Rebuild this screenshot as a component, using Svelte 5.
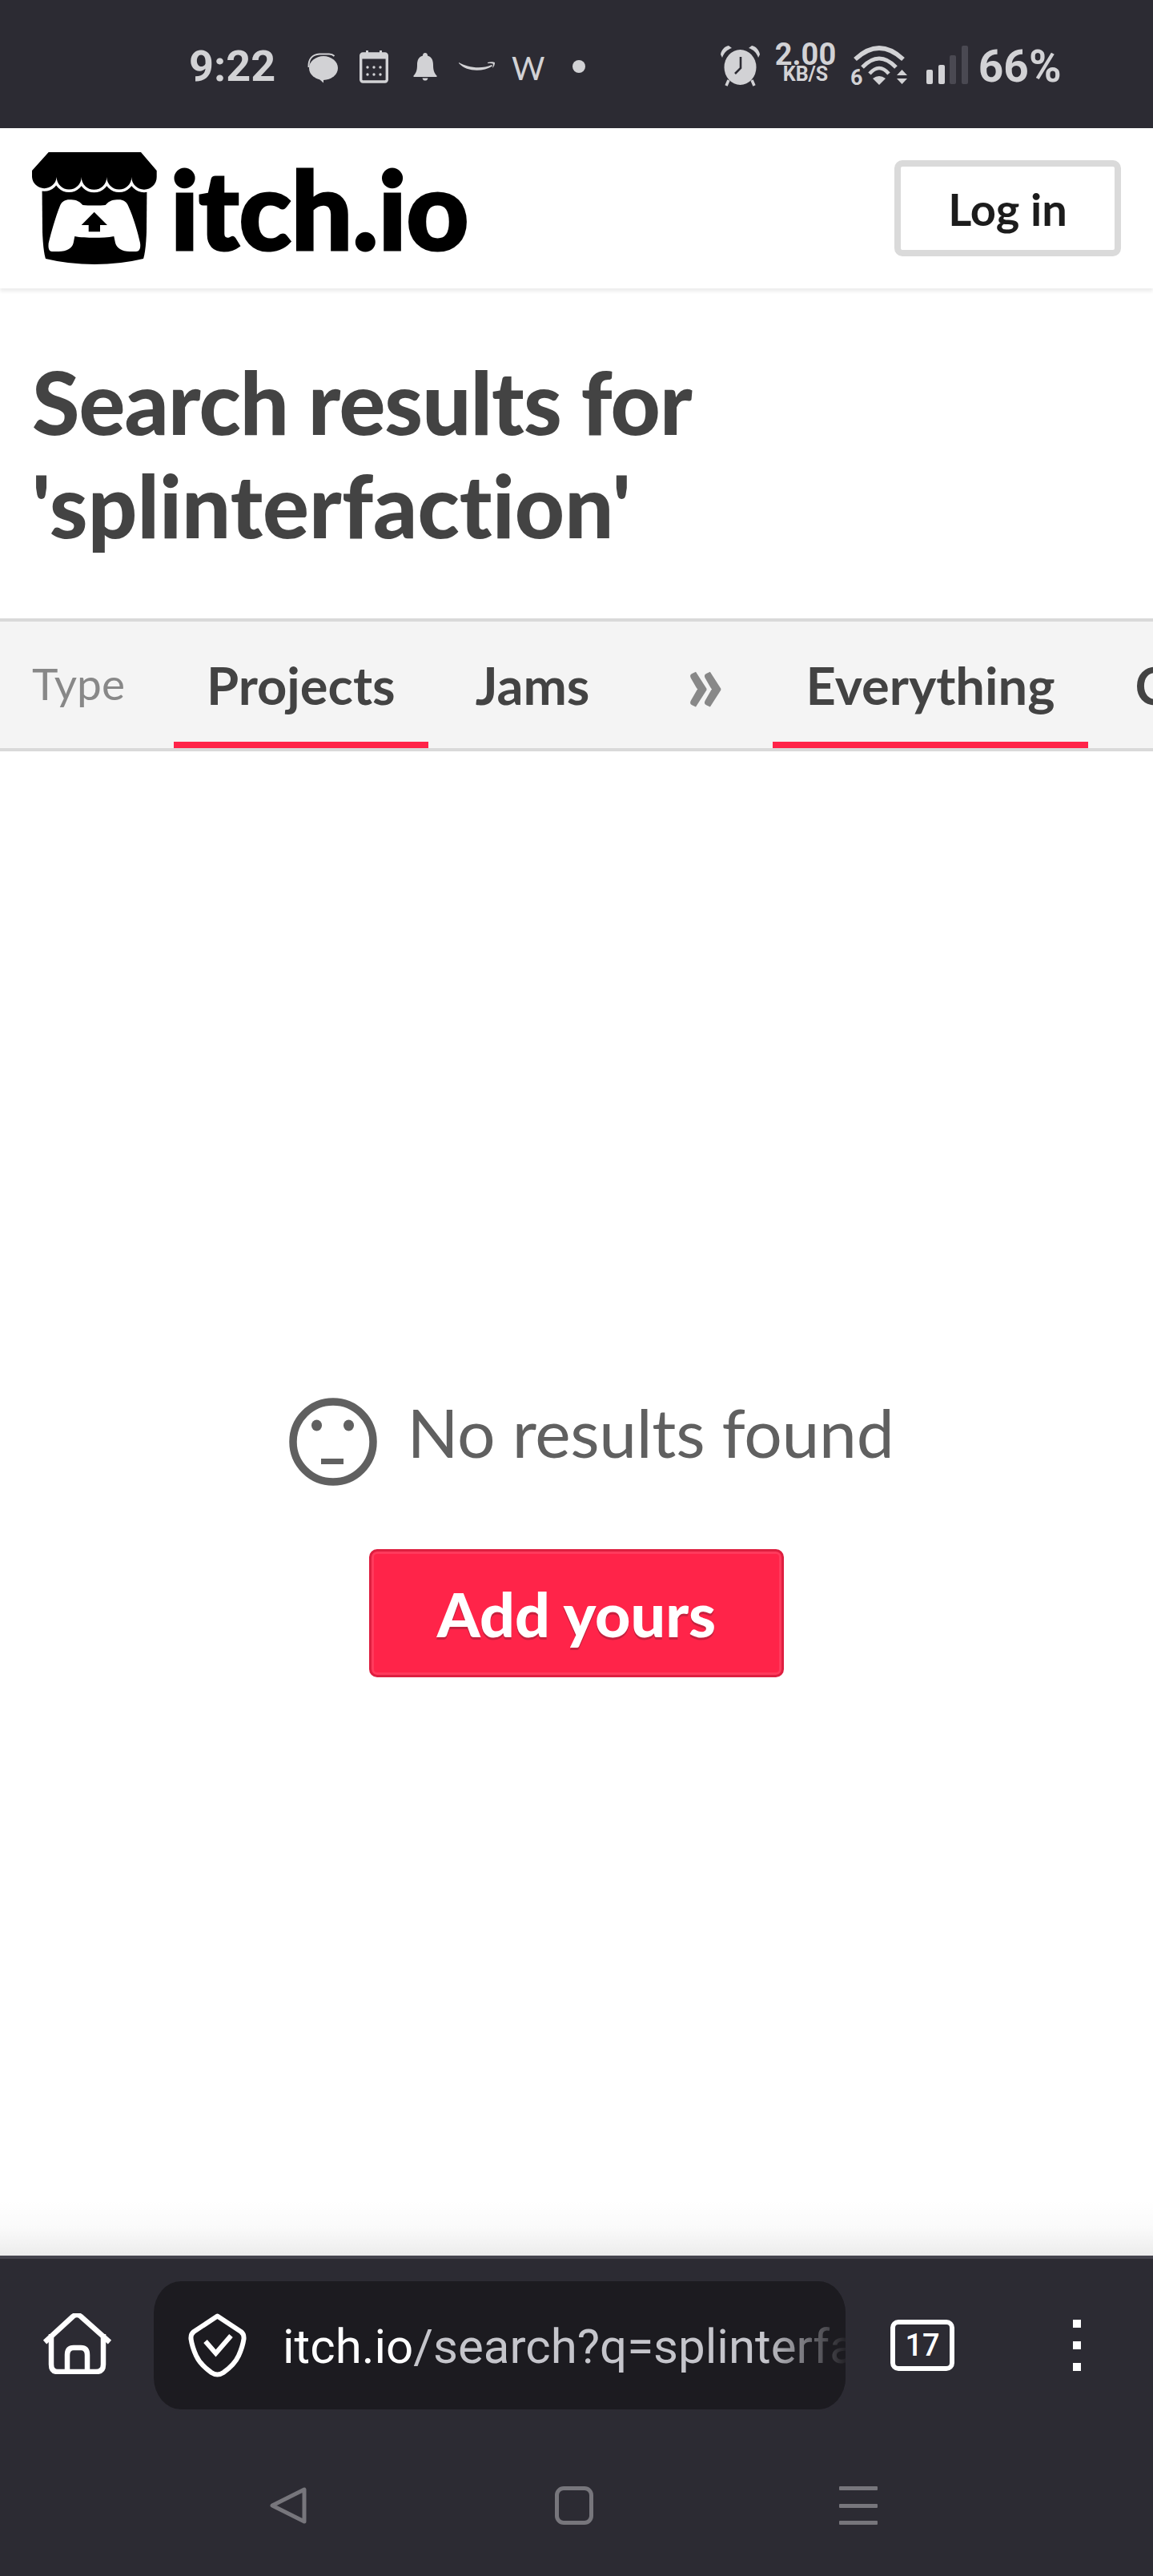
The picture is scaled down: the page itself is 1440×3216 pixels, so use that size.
<script>
  const tabsA = [
    { label: 'Projects', on: true },
    { label: 'Jams', on: false }
  ];
  const tabsB = [
    { label: 'Everything', on: true },
    { label: 'Classification', on: false }
  ];
</script>

<div class="page">
  <div class="status">
    <span class="time">9:22</span>
    <svg class="s chat" width="38" height="56" viewBox="0 55 38 56" fill="#d2d2d5">
      <path d="M1.500 84 C1 74 6 68 15 67.500 H27 C30 67.500 32 68.500 33.500 70" fill="none" stroke="#d2d2d5" stroke-width="2"/>
      <ellipse cx="20" cy="85" rx="18" ry="15"/>
      <path d="M7 92 L20 103.500 V96 Z"/>
    </svg>
    <svg class="s cal" width="36" height="56" viewBox="0 55 36 56" fill="#d2d2d5">
      <rect x="1.700" y="67" width="32.600" height="35" rx="2.500" fill="none" stroke="#d2d2d5" stroke-width="3.400"/>
      <rect x="1.700" y="67" width="32.600" height="6.500"/>
      <rect x="8" y="63" width="3" height="6"/><rect x="25" y="63" width="3" height="6"/>
      <circle cx="10" cy="84" r="1.700"/><circle cx="18" cy="84" r="1.700"/><circle cx="26" cy="84" r="1.700"/>
      <circle cx="10" cy="93" r="1.700"/><circle cx="18" cy="93" r="1.700"/><circle cx="26" cy="93" r="1.700"/>
    </svg>
    <svg class="s bell" width="30" height="56" viewBox="0 55 30 56" fill="#d2d2d5">
      <path d="M15 66 C17 66 18 67.500 18 69.500 C23 71 25 75 25 81 C25 87 26 91 29.500 94.500 V96 H.5 V94.500 C4 91 5 87 5 81 C5 75 7 71 12 69.500 C12 67.500 13 66 15 66 Z"/>
      <path d="M11.500 97.500 H18.500 C18 100 16.500 100.500 15 100.500 C13.500 100.500 12 100 11.500 97.500 Z"/>
    </svg>
    <svg class="s smile" width="45" height="56" viewBox="0 55 45 56" fill="#d2d2d5">
      <path d="M0 78 C10 84 28 87 41 81 L42 82.500 C30 90 10 90 0 79 Z"/>
      <path d="M36 78 C39 77 43 77 45 78 C45 81 44 83 42 85 C43 82 43 80 42.500 79.500 C41 79 38 79 36 79 Z"/>
    </svg>
    <span class="w">W</span>
    <span class="dot"></span>
    <svg class="s alarm" width="49" height="56" viewBox="0 55 49 56" fill="#d2d2d5">
      <ellipse cx="24.500" cy="84" rx="20" ry="22"/>
      <path d="M0 68 C1 62 5 58 10 57 L14 60 C8 62 4 66 2 72 Z"/>
      <path d="M49 68 C48 62 44 58 39 57 L35 60 C41 62 45 66 47 72 Z"/>
      <path d="M10 100 L7 107 M39 100 L42 107" stroke="#d2d2d5" stroke-width="3.500" fill="none"/>
      <path d="M25 71 V85 L18 92" stroke="#2c2b33" stroke-width="2.600" fill="none"/>
    </svg>
    <span class="speed"><b>2.00</b><i>KB/S</i></span>
    <svg class="s wifi" width="72" height="56" viewBox="0 55 72 56" fill="#d2d2d5">
      <path d="M6 74 Q36 46 66 74" fill="none" stroke="#d2d2d5" stroke-width="5.500"/>
      <path d="M15 84 Q36 62 57 84" fill="none" stroke="#d2d2d5" stroke-width="5"/>
      <path d="M24 92 Q36 78 48 92" fill="none" stroke="#d2d2d5" stroke-width="4.500"/>
      <path d="M28 98 Q36 92 44 98 L36 106 Z"/>
      <path d="M64.500 87 L71 94 H58 Z M58 98 H71 L64.500 105 Z"/>
      <text x="0" y="106" class="six">6</text>
    </svg>
    <span class="bars"><i class="b1"></i><i class="b2"></i><i class="b3"></i><i class="b4"></i></span>
    <span class="batt">66%</span>
  </div>

  <header class="top">
    <svg class="mark" width="156" height="140" viewBox="0 0 156 140">
      <path d="M12.500 40 H143.500 L143 100 Q142 124 139 133 Q110 140 78 140 Q46 140 17 133 Q14 124 13 100 Z" fill="#000"/>
      <path d="M63.300 66 C58 60 53 59.300 46.700 59.300 C41 59.300 37 62 35 66.700 C29 82 24 100 20.700 113.300 C20 120 21 124 25 124 H33 C44 124 50 120 51.700 113.300 L53.300 105 C60 106.500 70 106.700 77.700 106.700 C86 106.700 95 106.500 102.300 105 L104 113.300 C106 120 112 124 122 124 H130 C134 124 136 120 135 113.300 C132 100 127 82 120 66.700 C118 62 114 59.300 108.300 59.300 C102 59.300 97 60 91.700 66 C86 66.700 70 66.700 63.300 66 Z" fill="#fff"/>
      <path d="M77.700 74.700 L94 91 H85 V99.300 H70.700 V91 H61.700 Z" fill="#000"/>
      <path d="M20.700 0 Q78 -1 136 0 L155.700 23 V31 A15.700 15.700 0 0 1 124.300 31 A15.400 15.400 0 0 1 93.300 31 A15.800 15.800 0 0 1 61.700 31 A15.500 15.500 0 0 1 30.700 31 A15.400 15.400 0 0 1 0 31 V23 Z" fill="#000" stroke="#fff" stroke-width="7" paint-order="stroke"/>
    </svg>
    <span class="word">itch.io</span>
    <button class="login">Log in</button>
  </header>

  <h1 class="title">Search results for<br /><span class="second">'splinterfaction'</span></h1>

  <nav class="filters">
    <span class="ftype">Type</span>
    {#each tabsA as t}
      <span class="tab" class:on={t.on}>{t.label}</span>
    {/each}
    <span class="chev">»</span>
    {#each tabsB as t}
      <span class="tab" class:on={t.on}>{t.label}</span>
    {/each}
  </nav>

  <main class="empty">
    <div class="msg">
      <svg width="110" height="110" viewBox="0 0 110 110" fill="#606060">
        <circle cx="55" cy="55" r="50" fill="none" stroke="#606060" stroke-width="9.500"/>
        <ellipse cx="34.500" cy="34.500" rx="6.500" ry="7"/>
        <ellipse cx="74.500" cy="34.500" rx="6.500" ry="7"/>
        <rect x="40" y="76" width="28" height="7"/>
      </svg>
      <span class="msgtext">No results found</span>
    </div>
    <button class="add">Add yours</button>
  </main>

  <footer class="chrome">
    <div class="fade"></div>
    <div class="tools">
      <svg class="home" width="85" height="76" viewBox="0 0 85 76" fill="none" stroke="#fff" stroke-width="6.500">
        <path d="M2 36 L37 4 Q42 0 47 4 L83 36" stroke-linejoin="round"/>
        <path d="M10 26 V64 Q10 73 18 73 H66 Q75 73 75 64 V26"/>
        <path d="M30 73 V52 Q30 43 38 43 H47 Q55 43 55 52 V73"/>
      </svg>
      <div class="url">
        <svg class="shield" width="73" height="80" viewBox="0 0 73 80" fill="none" stroke="#fff" stroke-width="6">
          <path d="M36.500 3.500 L66 23 Q70 26 69.500 32 Q68 42 63 53 Q58 64 44 74 Q36.500 79 29 74 Q15 64 10 53 Q5 42 3.500 32 Q3 26 7 23 Z" stroke-linejoin="round"/>
          <path d="M21.500 35 L34.500 50 L53.500 28"/>
        </svg>
        <span class="addr"><em>itch.io</em>/search?q=splinterfaction</span>
        <span class="urlfade"></span>
      </div>
      <span class="count">17</span>
      <span class="menu"><i></i><i></i><i></i></span>
    </div>
    <div class="nav">
      <svg class="back" width="46" height="48" viewBox="0 0 46 48" fill="none" stroke="#77767c" stroke-width="5" stroke-linejoin="round">
        <path d="M43 4 V44 L3 24 Z" />
      </svg>
      <span class="square"></span>
      <span class="lines"><i></i><i></i><i></i></span>
    </div>
  </footer>
</div>

<style>
  :global(body) { margin: 0; background: #fff; }
  .page {
    width: 1440px;
    height: 3216px;
    display: flex;
    flex-direction: column;
    overflow: hidden;
    font-family: Lato, "Liberation Sans", sans-serif;
    font-variant-ligatures: none;
  }

  /* status bar */
  .status {
    height: 160px;
    flex: none;
    box-sizing: border-box;
    background: #2c2b33;
    color: #d2d2d5;
    display: flex;
    align-items: center;
    padding: 6px 0 0 236px;
    font-family: Roboto, sans-serif;
  }
  .s { flex: none; display: block; }
  .time { font-size: 54px; font-weight: 700; width: 109px; line-height: 56px; margin-right: 39px; }
  .cal { margin-left: 27px; }
  .bell { margin-left: 31px; }
  .smile { margin-left: 27px; }
  .w {
    font-family: Lato, sans-serif;
    font-weight: 400;
    font-size: 40px;
    line-height: 56px;
    width: 41px;
    margin-left: 21px;
    padding-top: 4px;
  }
  .dot { width: 16px; height: 16px; border-radius: 50%; background: #d2d2d5; margin-left: 35px; }
  .alarm { margin-left: 169px; }
  .speed {
    margin-left: 18px;
    width: 78px;
    height: 56px;
    display: flex;
    flex-direction: column;
    align-items: center;
    margin-top: -4px;
  }
  .speed b { font-size: 38px; font-weight: 700; line-height: 30px; }
  .speed i { font-style: normal; font-size: 25px; font-weight: 700; line-height: 20px; }
  .wifi { margin-left: 17px; }
  .six { font: 700 27px Roboto, sans-serif; fill: #d2d2d5; }
  .bars { display: flex; align-items: flex-end; gap: 6.600px; height: 48px; margin-left: 23px; margin-top: -4px; }
  .bars i { width: 8px; border-radius: 2px; background: #d2d2d5; }
  .b1 { height: 18px; }
  .b2 { height: 24px; }
  .bars .b3 { height: 36px; background: #4a4952; }
  .bars .b4 { height: 48px; background: #4a4952; }
  .batt { font-size: 55px; font-weight: 700; line-height: 56px; margin-left: 13px; }

  /* site header */
  .top {
    height: 200px;
    flex: none;
    box-sizing: border-box;
    background: #fff;
    display: flex;
    align-items: center;
    padding: 0 40px;
    box-shadow: 0 4px 4px rgba(0, 0, 0, .07);
    position: relative;
  }
  .word {
    font-weight: 900;
    font-size: 135px;
    line-height: 1;
    color: #000;
    margin-left: 17px;
    -webkit-text-stroke: 3px #000;
  }
  .login {
    margin-left: auto;
    width: 283px;
    height: 120px;
    box-sizing: border-box;
    border: 8px solid #dadada;
    border-radius: 10px;
    background: #fff;
    color: #1c1c1c;
    font: 700 56px Lato, sans-serif;
    padding: 0;
  }

  .title {
    margin: 0;
    padding: 77px 40px 0;
    height: 412px;
    box-sizing: border-box;
    flex: none;
    font-size: 108px;
    line-height: 129px;
    font-weight: 900;
    letter-spacing: -.9px;
    color: #434343;
  }
  .second { letter-spacing: .1px; }

  .filters {
    height: 166px;
    flex: none;
    box-sizing: border-box;
    background: #f4f4f4;
    border-top: 4px solid #d9d9d9;
    border-bottom: 4px solid #d9d9d9;
    display: flex;
    padding-left: 40px;
    white-space: nowrap;
    overflow: hidden;
  }
  .ftype { font-size: 55px; color: #888; line-height: 158px; width: 116px; margin-right: 61px; margin-top: -2px; flex: none; }
  .tab {
    padding: 0 41px;
    margin-right: 18px;
    font-size: 65px;
    font-weight: 700;
    color: #434343;
    line-height: 158px;
    box-sizing: border-box;
    height: 158px;
    flex: none;
  }
  .tab.on { border-bottom: 8px solid #ff2449; }
  .chev {
    flex: none;
    width: 42px;
    margin: 0 64px 0 64px;
    display: flex;
    justify-content: center;
    font-size: 104px;
    font-weight: 900;
    color: #888;
    line-height: 146px;
  }

  .empty {
    flex: 1;
    display: flex;
    flex-direction: column;
    align-items: center;
    padding-top: 807px;
  }
  .msg { display: flex; align-items: center; gap: 38px; color: #606060; font-size: 84px; font-weight: 400; height: 110px; margin-left: 37px; letter-spacing: -.3px; }
  .msg svg { display: block; flex: none; }
  .msgtext { margin-top: -26px; }
  .add {
    margin-top: 79px;
    width: 518px;
    height: 160px;
    box-sizing: border-box;
    background: #ff2449;
    border: 3px solid #de1f40;
    border-radius: 10px;
    box-shadow: inset 0 0 0 3px #ff3a5c;
    color: #fff;
    font: 900 77px Lato, sans-serif;
    text-shadow: 0 3px 0 #c5223f;
    padding: 0;
  }

  /* browser chrome */
  .chrome {
    height: 400px;
    flex: none;
    box-sizing: border-box;
    background: #2c2b33;
    border-top: 4px solid #45444e;
    position: relative;
  }
  .fade {
    position: absolute;
    left: 0;
    right: 0;
    top: -74px;
    height: 70px;
    background: linear-gradient(rgba(0, 0, 0, 0), rgba(0, 0, 0, .02) 50%, rgba(0, 0, 0, .075));
  }
  .tools { display: flex; align-items: center; height: 160px; margin-top: 28px; padding-left: 54px; }
  .home { display: block; flex: none; margin-top: -4px; }
  .url {
    margin-left: 53px;
    width: 864px;
    height: 160px;
    border-radius: 34px / 40px;
    background: #1c1b20;
    display: flex;
    align-items: center;
    position: relative;
    overflow: hidden;
    flex: none;
    padding-left: 43px;
    box-sizing: border-box;
  }
  .shield { display: block; flex: none; }
  .addr {
    margin-left: 45px;
    margin-top: 3px;
    font: 400 60px Roboto, sans-serif;
    color: #c5c5cb;
    white-space: nowrap;
  }
  .addr em { font-style: normal; color: #fff; }
  .urlfade {
    position: absolute;
    top: 0;
    bottom: 0;
    right: 0;
    width: 100px;
    background: linear-gradient(90deg, rgba(28, 27, 32, 0), rgba(28, 27, 32, .95));
  }
  .count {
    margin-left: 56px;
    width: 80px;
    height: 64px;
    box-sizing: border-box;
    border: 6px solid #fff;
    border-radius: 10px;
    color: #fff;
    font: 500 38px/52px Roboto, sans-serif;
    text-align: center;
    flex: none;
  }
  .menu { margin-left: 148px; width: 10px; height: 64px; display: flex; flex-direction: column; justify-content: space-between; }
  .menu i { height: 10px; background: #fff; }
  .nav { display: flex; align-items: center; height: 48px; margin-top: 96px; padding-left: 337px; }
  .back { display: block; flex: none; }
  .square {
    margin-left: 310px;
    width: 48px;
    height: 48px;
    box-sizing: border-box;
    border: 5px solid #77767c;
    border-radius: 11px;
    flex: none;
  }
  .lines { margin-left: 307px; width: 48px; height: 48px; display: flex; flex-direction: column; justify-content: space-between; }
  .lines i { height: 5px; border-radius: 1px; background: #77767c; }
</style>
